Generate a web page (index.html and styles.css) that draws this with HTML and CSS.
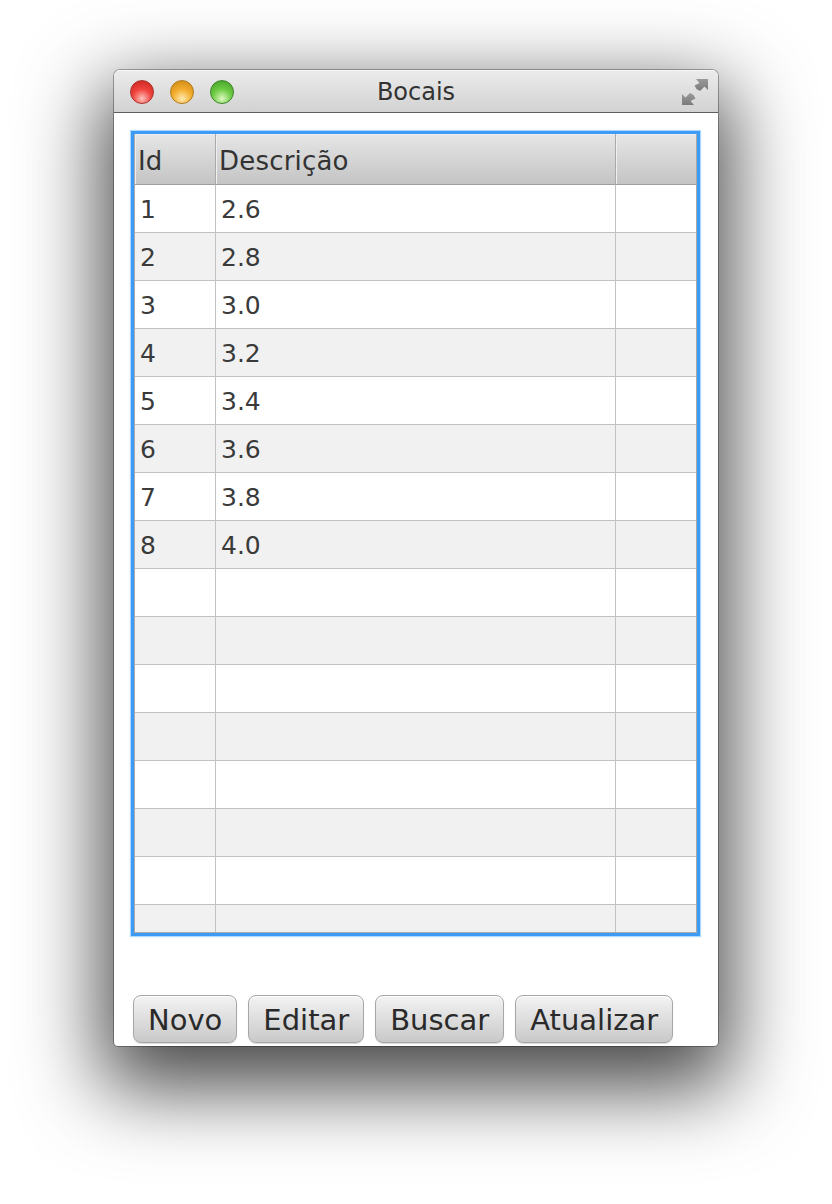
FILE: index.html
```html
<!DOCTYPE html>
<html lang="pt">
<head>
<meta charset="utf-8">
<title>Bocais</title>
<link rel="stylesheet" href="styles.css">
</head>
<body>
<div class="window">
  <div class="titlebar">
    <div class="lights">
      <span class="light red"></span>
      <span class="light yellow"></span>
      <span class="light green"></span>
    </div>
    <div class="title">Bocais</div>
    <svg class="resize" width="30" height="28" viewBox="0 0 30 28">
      <defs>
        <linearGradient id="ag" x1="0" y1="0" x2="0" y2="1">
          <stop offset="0" stop-color="#9a9a9a"/>
          <stop offset="1" stop-color="#7a7a7a"/>
        </linearGradient>
      </defs>
      <path d="M28 1 L28 12 L24.5 8.5 L20 13 L16.5 11 L14.5 7.5 L19.5 5 L16 1 Z" fill="url(#ag)"/>
      <path d="M2 27 L2 16 L5.5 19.5 L10 15 L13.5 17 L15.5 20.5 L10.5 23 L14 27 Z" fill="url(#ag)"/>
    </svg>
  </div>
  <div class="content">
    <div class="tablebox">
      <div class="grid">
        <div class="hcell">Id</div>
        <div class="hcell">Descrição</div>
        <div class="hcell last"></div>

        <div class="cell">1</div><div class="cell">2.6</div><div class="cell last"></div>
        <div class="cell alt">2</div><div class="cell alt">2.8</div><div class="cell alt last"></div>
        <div class="cell">3</div><div class="cell">3.0</div><div class="cell last"></div>
        <div class="cell alt">4</div><div class="cell alt">3.2</div><div class="cell alt last"></div>
        <div class="cell">5</div><div class="cell">3.4</div><div class="cell last"></div>
        <div class="cell alt">6</div><div class="cell alt">3.6</div><div class="cell alt last"></div>
        <div class="cell">7</div><div class="cell">3.8</div><div class="cell last"></div>
        <div class="cell alt">8</div><div class="cell alt">4.0</div><div class="cell alt last"></div>
        <div class="cell"></div><div class="cell"></div><div class="cell last"></div>
        <div class="cell alt"></div><div class="cell alt"></div><div class="cell alt last"></div>
        <div class="cell"></div><div class="cell"></div><div class="cell last"></div>
        <div class="cell alt"></div><div class="cell alt"></div><div class="cell alt last"></div>
        <div class="cell"></div><div class="cell"></div><div class="cell last"></div>
        <div class="cell alt"></div><div class="cell alt"></div><div class="cell alt last"></div>
        <div class="cell"></div><div class="cell"></div><div class="cell last"></div>
        <div class="cell alt partial"></div><div class="cell alt partial"></div><div class="cell alt last partial"></div>
      </div>
    </div>
    <div class="buttons">
      <button class="btn">Novo</button>
      <button class="btn">Editar</button>
      <button class="btn">Buscar</button>
      <button class="btn">Atualizar</button>
    </div>
  </div>
</div>
</body>
</html>
```

FILE: styles.css
```css
html, body {
  margin: 0;
  padding: 0;
  background: #ffffff;
}

body {
  font-family: "DejaVu Sans", "Liberation Sans", sans-serif;
  padding-top: 70px;
  padding-left: 114px;
  height: 1134px;
  overflow: hidden;
}

.window {
  width: 604px;
  height: 976px;
  border-radius: 6px 6px 4px 4px;
  background: #ffffff;
  box-shadow: 0 0 0 1px rgba(0, 0, 0, 0.3),
              0 30px 80px 12px rgba(0, 0, 0, 0.72);
  overflow: hidden;
  display: flex;
  flex-direction: column;
}

.titlebar {
  height: 42px;
  flex: none;
  display: flex;
  align-items: center;
  position: relative;
  background: linear-gradient(#ececec, #d2d2d2);
  border-bottom: 1px solid #5e5e5e;
  box-shadow: inset 0 1px 0 #f6f6f6;
}

.lights {
  display: flex;
  gap: 16px;
  padding-left: 16px;
  padding-top: 2px;
}

.light {
  width: 24px;
  height: 24px;
  border-radius: 50%;
  box-sizing: border-box;
  display: block;
}

.red {
  background: radial-gradient(circle at 50% 80%, #ffc2bd 0, #f0453e 45%, #c8201c 100%);
  border: 1px solid #a8302b;
}

.yellow {
  background: radial-gradient(circle at 50% 80%, #ffeab0 0, #f3ae2e 45%, #c98413 100%);
  border: 1px solid #b07a1c;
}

.green {
  background: radial-gradient(circle at 50% 80%, #ddf8c0 0, #6fcc46 45%, #3e9a21 100%);
  border: 1px solid #3b8528;
}

.title {
  position: absolute;
  left: 0;
  right: 0;
  top: 0;
  bottom: 0;
  display: flex;
  align-items: center;
  justify-content: center;
  font-size: 24px;
  color: #333333;
  padding-top: 2px;
  pointer-events: none;
}

.resize {
  margin-left: auto;
  margin-right: 8px;
  margin-top: 2px;
}

.content {
  flex: 1;
  padding: 18px 18px 0 17px;
  display: flex;
  flex-direction: column;
}

.tablebox {
  height: 805px;
  box-sizing: border-box;
  border: 3px solid #3c9cf5;
  box-shadow: 0 0 1px 1px rgba(80, 170, 255, 0.45);
  overflow: hidden;
}

.grid {
  height: 100%;
  box-sizing: border-box;
  border: 1px solid #a9a9a9;
  border-top: none;
  display: grid;
  grid-template-columns: 81px 400px 1fr;
  grid-auto-rows: 48px;
  grid-template-rows: 51px;
  overflow: hidden;
  background: #f1f1f1;
}

.hcell {
  box-sizing: border-box;
  background: linear-gradient(#e6e6e6, #c4c4c4);
  border-bottom: 1px solid #9f9f9f;
  border-right: 1px solid #a9a9a9;
  box-shadow: inset 1px 0 0 #efefef, inset 0 1px 0 #efefef;
  font-size: 26px;
  color: #333333;
  display: flex;
  align-items: center;
  padding: 4px 0 0 3px;
  letter-spacing: 0.2px;
}

.hcell.last,
.cell.last {
  border-right: none;
}

.cell {
  box-sizing: border-box;
  background: #ffffff;
  border-bottom: 1px solid #c2c2c2;
  border-right: 1px solid #c2c2c2;
  font-size: 25px;
  color: #3a3a3a;
  display: flex;
  align-items: center;
  padding: 1px 0 0 5px;
}

.cell.alt {
  background: #f1f1f1;
}

.cell.partial {
  border-bottom: none;
}

.buttons {
  display: flex;
  gap: 11px;
  margin-top: 59px;
  padding-left: 2px;
}

.btn {
  font-family: "DejaVu Sans", "Liberation Sans", sans-serif;
  font-size: 29px;
  color: #2a2a2a;
  height: 48px;
  padding: 2px 14px 0;
  border: 1px solid #a6a6a6;
  border-radius: 8px;
  background: linear-gradient(#f3f3f3, #dedede 50%, #c9c9c9);
  box-shadow: inset 0 1px 0 #ffffff, 0 1px 1px rgba(0, 0, 0, 0.15);
  line-height: 1;
}
```
